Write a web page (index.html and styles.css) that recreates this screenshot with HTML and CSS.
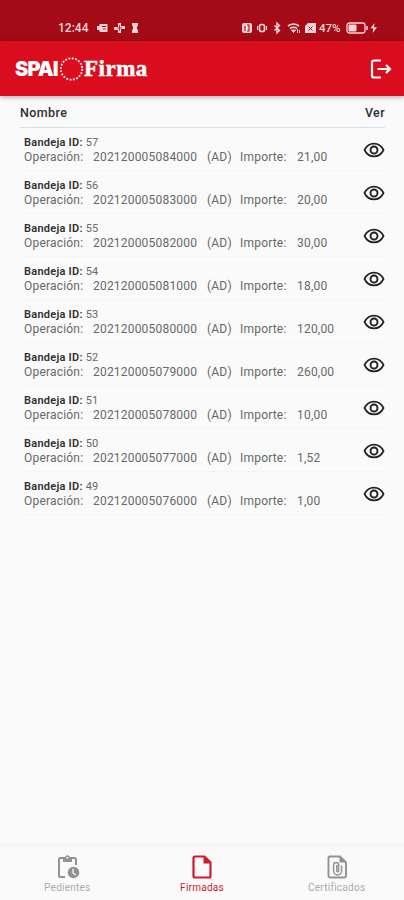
FILE: index.html
```html
<!DOCTYPE html>
<html lang="es">
<head>
  <meta charset="UTF-8">
  <title>SPAI Firma</title>
  <link rel="stylesheet" href="styles.css">
</head>
<body>
  <svg width="0" height="0" class="defs">
    <symbol id="ojo" viewBox="0 0 22 16">
      <path d="M1.500 8C3.500 4 7 1.600 11 1.600S18.500 4 20.500 8C18.500 12 15 14.400 11 14.400S3.500 12 1.500 8Z" fill="none" stroke="currentColor" stroke-width="1.700"/>
      <circle cx="11" cy="8" r="3.500" fill="none" stroke="currentColor" stroke-width="1.900"/>
    </symbol>
  </svg>

  <div class="status">
    <span class="hora">12:44</span>
    <svg class="avisos" width="46" height="14" viewBox="0 0 46 14" fill="#f6d5d7">
      <path d="M3.500 3h8v8h-8zM1 5h3v4H1z"/>
      <path d="M6 5.500h4M7 8h2.500" stroke="#a50b17" stroke-width="1"/>
      <path d="M18 6h4V2h3v3h4v3h-4v4h-3V9h-4z"/>
      <path d="M21 7h5M23.500 4v6" stroke="#a50b17" stroke-width=".8"/>
      <path d="M36 2h6v3h-1v3l1 1v3h-6V9l1-1V5h-1z"/>
    </svg>
    <svg class="sistema" width="76" height="14" viewBox="0 0 76 14" fill="none" stroke="#f6d5d7">
      <rect x="1" y="2" width="10" height="10" rx="2" fill="#f6d5d7" stroke="none"/>
      <path d="M4 10V5M6 4h2v6H6" stroke="#a50b17" stroke-width="1.100"/>
      <rect x="18.500" y="3.500" width="5" height="7" rx="2" stroke-width="1.700"/>
      <path d="M16.500 5v4M25.500 5v4" stroke-width="1"/>
      <path d="M33.500 4.500l5 5-2.500 2.300V2.200l2.500 2.300-5 5" stroke-width="1.400"/>
      <path d="M47 5q5.500-4 11 0M49 7.500q3.500-2.500 7 0" stroke-width="1.700"/>
      <path d="M50.500 9h4L52.500 11.500zM56.500 8v4M58.500 9v3" fill="#f6d5d7" stroke-width="1"/>
      <path d="M67 2h8v10H64V5z" fill="#f6d5d7" stroke="none"/>
      <path d="M67.500 5.500l4 4m0-4l-4 4" stroke="#a50b17"/>
    </svg>
    <span class="carga">47%</span>
    <svg class="bateria" width="33" height="14" viewBox="0 0 33 14" fill="none" stroke="#f6d5d7">
      <rect x="1" y="2" width="18" height="10" rx="2.500" stroke-width="1.300"/>
      <path d="M3 4h7v6H3z" fill="#f6d5d7"/>
      <path d="M21 5v4" stroke-width="1.500"/>
      <path d="M28.500 2L24.500 7.300h2.700l-.5 4.700L31 6.300H28z" fill="#f6d5d7" stroke="none"/>
    </svg>
  </div>

  <header class="barra">
    <div class="logo">
      <span class="spai">SPAI</span>
      <svg class="circulo" width="25" height="26" viewBox="0 0 25 26">
        <circle cx="12.500" cy="13" r="10.700" fill="none" stroke="#fff" stroke-width="1.800" stroke-dasharray="1.800 1.560"/>
      </svg>
      <span class="firma">Firma</span>
    </div>
    <svg class="salir" width="22" height="20" viewBox="0 0 22 20" fill="none" stroke="#fff" stroke-width="2.200">
      <path d="M11 1.500H4A2 2 0 0 0 2 3.500V16.500A2 2 0 0 0 4 18.500H11M7.500 10H20M16 6L20 10L16 14"/>
    </svg>
  </header>

  <main>
    <div class="cabecera"><span>Nombre</span><span>Ver</span></div>
    <div id="lista"></div>
  </main>

  <nav class="menu">
    <a class="opcion">
      <svg width="26" height="26" viewBox="0 0 26 26">
        <path d="M11 23H6.500A1.500 1.500 0 0 1 5 21.500V5.500A1.500 1.500 0 0 1 6.500 4H20.500A1.500 1.500 0 0 1 22 5.500V11" fill="none" stroke="currentColor" stroke-width="2"/>
        <path d="M9 3h2a2.700 2.700 0 0 1 5 0H18v5H9z" fill="currentColor"/>
        <circle cx="13.500" cy="3.800" r="1" fill="#fafafa"/>
        <circle cx="19.500" cy="18.500" r="5.800" fill="currentColor"/>
        <path d="M19 14.800V19l2.800 2" fill="none" stroke="#fafafa" stroke-width="1.300"/>
      </svg>
      <span>Pedientes</span>
    </a>
    <a class="opcion activa">
      <svg width="26" height="26" viewBox="0 0 26 26">
        <path d="M6.500 2.500H15.500L21.500 8.500V22A1.500 1.500 0 0 1 20 23.500H6A1.500 1.500 0 0 1 4.500 22V4A1.500 1.500 0 0 1 6 2.500Z" fill="none" stroke="currentColor" stroke-width="2.200"/>
        <path d="M14.500 2.500V9.500H21.500z" fill="currentColor"/>
      </svg>
      <span>Firmadas</span>
    </a>
    <a class="opcion">
      <svg width="26" height="26" viewBox="0 0 26 26" fill="none" stroke="currentColor">
        <path d="M5.500 2.500H16L22 8.500V22A1.500 1.500 0 0 1 20.500 23.500H6A1.500 1.500 0 0 1 4.500 22V3.500Z" stroke-width="1.900"/>
        <path d="M15.500 2.500V8.500H22z" fill="currentColor" stroke="none"/>
        <path d="M12.800 11V17.200A1 1 0 0 0 14.600 17.200V11A2.500 2.500 0 0 0 9.600 11V17A4 4 0 0 0 17.600 17V11.500" stroke-width="1.500"/>
      </svg>
      <span>Certificados</span>
    </a>
  </nav>

  <script>
    const importes = ['21,00', '20,00', '30,00', '18,00', '120,00', '260,00', '10,00', '1,52', '1,00'];
    const lista = document.getElementById('lista');
    importes.forEach((importe, i) => {
      lista.innerHTML += `
        <div class="fila">
          <div>
            <div class="bandeja"><b>Bandeja ID:</b> ${57 - i}</div>
            <div class="datos">
              <span>Operación:</span><span>2021200050${84 - i}000</span><span>(AD)</span><span>Importe:</span><span>${importe}</span>
            </div>
          </div>
          <svg class="ver" width="22" height="16"><use href="#ojo"/></svg>
        </div>`;
    });
  </script>
</body>
</html>
```
FILE: styles.css
```css
* {
  box-sizing: border-box;
}
body {
  margin: 0;
  height: 900px;
  display: flex;
  flex-direction: column;
  overflow: hidden;
  background-color: #fafafa;
  font-family: Roboto, sans-serif;
}
.defs {
  display: none;
}
.status {
  flex: none;
  display: flex;
  align-items: center;
  height: 41px;
  padding: 14px 20px 0 58px;
  background-color: #a50b17;
  color: #f6d5d7;
  font-size: 12px;
  line-height: 14px;
}
.hora {
  width: 38px;
  font-weight: 500;
}
.sistema {
  margin-left: 99px;
}
.carga {
  width: 29px;
  padding-left: 2px;
  font-size: 11.5px;
  font-weight: 500;
}
.barra {
  flex: none;
  display: flex;
  justify-content: space-between;
  align-items: center;
  height: 55px;
  padding: 0 12px 0 15px;
  background-color: #d90d1e;
  box-shadow: 0 1px 5px rgba(0, 0, 0, 0.35);
}
.logo {
  display: flex;
  align-items: center;
  color: white;
  white-space: nowrap;
}
.spai {
  width: 44px;
  font-family: Inter, sans-serif;
  font-size: 20px;
  font-weight: 900;
  letter-spacing: -0.9px;
}
.firma {
  font-family: "Liberation Serif", serif;
  font-size: 23px;
  font-weight: bold;
  letter-spacing: 0.5px;
  -webkit-text-stroke: 0.5px white;
}
main {
  flex: 1;
  padding: 0 19px 0 20px;
}
.cabecera {
  display: flex;
  justify-content: space-between;
  height: 32px;
  padding-top: 9px;
  border-bottom: 1px solid #cfe3e7;
  color: #303030;
  font-size: 12.5px;
  line-height: 16px;
  font-weight: 500;
  letter-spacing: 0.4px;
}
.fila {
  display: flex;
  justify-content: space-between;
  height: 43px;
  padding: 8px 0 0 4px;
  border-bottom: 1px solid #f4f4f4;
  color: #686868;
}
.bandeja {
  font-size: 11px;
  line-height: 14px;
  letter-spacing: 0.25px;
}
.bandeja b {
  color: #303030;
  font-weight: 600;
}
.datos {
  display: grid;
  grid-template-columns: 69px 114px 33px 57px auto;
  font-size: 12px;
  line-height: 14px;
  letter-spacing: 0.2px;
}
.ver {
  margin-top: 6px;
  color: #222;
}
.menu {
  flex: none;
  display: flex;
  height: 55px;
  border-top: 1px solid #f4f4f4;
  box-shadow: 0 -1px 2px rgba(0, 0, 0, 0.02);
}
.opcion {
  flex: 1;
  display: flex;
  flex-direction: column;
  align-items: center;
  padding-top: 8px;
  color: #929292;
  font-size: 10px;
  line-height: 16px;
  letter-spacing: 0.25px;
}
.opcion span {
  color: #aaa;
}
.activa, .activa span {
  color: #d2192a;
}
```
